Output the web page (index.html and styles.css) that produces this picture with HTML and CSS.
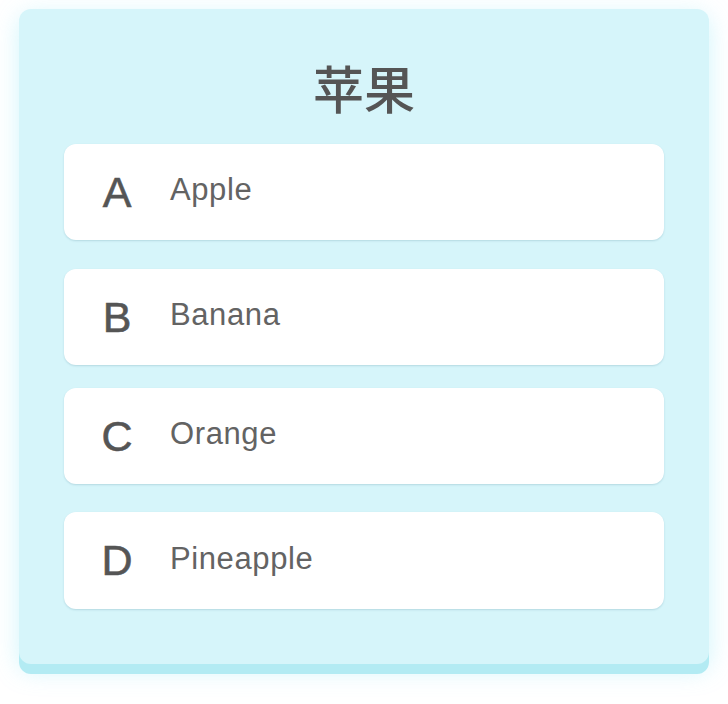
FILE: index.html
```html
<!DOCTYPE html>
<html lang="zh">
<head>
<meta charset="utf-8">
<link rel="stylesheet" href="styles.css">
</head>
<body>
<div class="card">
  <h1 class="title">苹果</h1>
  <ul class="options">
    <li class="option opt-a"><span class="letter">A</span><span class="label">Apple</span></li>
    <li class="option opt-b"><span class="letter">B</span><span class="label">Banana</span></li>
    <li class="option opt-c"><span class="letter">C</span><span class="label">Orange</span></li>
    <li class="option opt-d"><span class="letter">D</span><span class="label">Pineapple</span></li>
  </ul>
</div>
</body>
</html>
```

FILE: styles.css
```css
html, body {
  margin: 0;
  padding: 0;
  background: #ffffff;
}
body {
  width: 728px;
  height: 704px;
  padding: 9px 0 0 19px;
  box-sizing: border-box;
  font-family: "Liberation Sans", "Noto Sans CJK SC", sans-serif;
}
.card {
  width: 690px;
  height: 655px;
  box-sizing: border-box;
  background: #d6f5fa;
  border-radius: 12px;
  box-shadow: 0 10px 0 #b3ebf3, 0 6px 24px rgba(120, 225, 245, 0.35);
  padding: 43px 45px 0 45px;
}
.title {
  margin: 0;
  height: 70px;
  line-height: 70px;
  text-align: center;
  font-family: "Noto Sans CJK SC", sans-serif;
  font-weight: 500;
  font-size: 51px;
  color: #555555;
}
.options {
  list-style: none;
  margin: 22px 0 0 0;
  padding: 0;
}
.option {
  display: flex;
  align-items: center;
  height: 96px;
  background: #ffffff;
  border-radius: 12px;
  box-shadow: 0 1px 2px rgba(60, 120, 140, 0.22);
  padding-left: 33px;
}
.opt-b { margin-top: 29px; }
.opt-c { margin-top: 23px; }
.opt-d { margin-top: 28px; height: 97px; }
.letter {
  width: 40px;
  text-align: center;
  font-size: 43px;
  color: #555555;
  -webkit-text-stroke: 0.6px #555555;
}
.label {
  margin-left: 33px;
  padding-bottom: 4px;
  font-size: 31px;
  letter-spacing: 0.6px;
  color: #636363;
}
```
